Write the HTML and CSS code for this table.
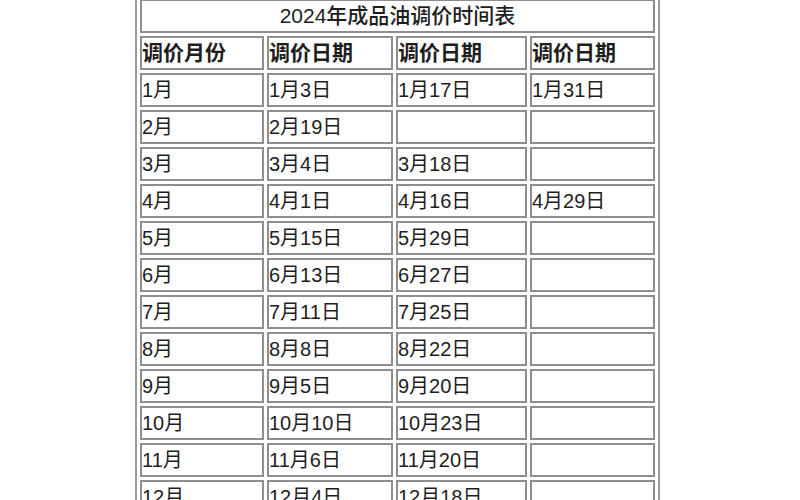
FILE: index.html
```html
<!DOCTYPE html>
<html lang="zh-CN">
<head>
<meta charset="utf-8">
<title>2024年成品油调价时间表</title>
<link rel="stylesheet" href="styles.css">
</head>
<body>
<table class="sched">
  <tr><td class="title" colspan="4">2024年成品油调价时间表</td></tr>
  <tr class="head">
    <td class="c1">调价月份</td>
    <td class="c2">调价日期</td>
    <td class="c3">调价日期</td>
    <td class="c4">调价日期</td>
  </tr>
  <tr><td>1月</td><td>1月3日</td><td>1月17日</td><td>1月31日</td></tr>
  <tr><td>2月</td><td>2月19日</td><td></td><td></td></tr>
  <tr><td>3月</td><td>3月4日</td><td>3月18日</td><td></td></tr>
  <tr><td>4月</td><td>4月1日</td><td>4月16日</td><td>4月29日</td></tr>
  <tr><td>5月</td><td>5月15日</td><td>5月29日</td><td></td></tr>
  <tr><td>6月</td><td>6月13日</td><td>6月27日</td><td></td></tr>
  <tr><td>7月</td><td>7月11日</td><td>7月25日</td><td></td></tr>
  <tr><td>8月</td><td>8月8日</td><td>8月22日</td><td></td></tr>
  <tr><td>9月</td><td>9月5日</td><td>9月20日</td><td></td></tr>
  <tr><td>10月</td><td>10月10日</td><td>10月23日</td><td></td></tr>
  <tr><td>11月</td><td>11月6日</td><td>11月20日</td><td></td></tr>
  <tr><td>12月</td><td>12月4日</td><td>12月18日</td><td></td></tr>
</table>
</body>
</html>
```
FILE: styles.css
```css
html, body {
  margin: 0;
  padding: 0;
  background: #ffffff;
  overflow: hidden;
}
body {
  font-family: "Liberation Sans", "Noto Sans CJK SC", sans-serif;
  color: #1e1e1e;
}
.sched {
  margin: -6px 0 0 135px;
  border: 2px solid #9a9a9a;
  border-collapse: separate;
  border-spacing: 3px;
  empty-cells: show;
}
.sched td {
  height: 30px;
  padding: 0;
  border: 2px solid #8e8e8e;
  font-size: 20px;
  line-height: 30px;
  vertical-align: middle;
  text-align: left;
  white-space: nowrap;
}
.sched td.title {
  text-align: center;
  font-size: 21px;
  font-weight: 500;
}
.head td {
  font-weight: bold;
  font-size: 21px;
}
.c1 { width: 120px; }
.c2 { width: 122px; }
.c3 { width: 127px; }
.c4 { width: 121px; }
```
